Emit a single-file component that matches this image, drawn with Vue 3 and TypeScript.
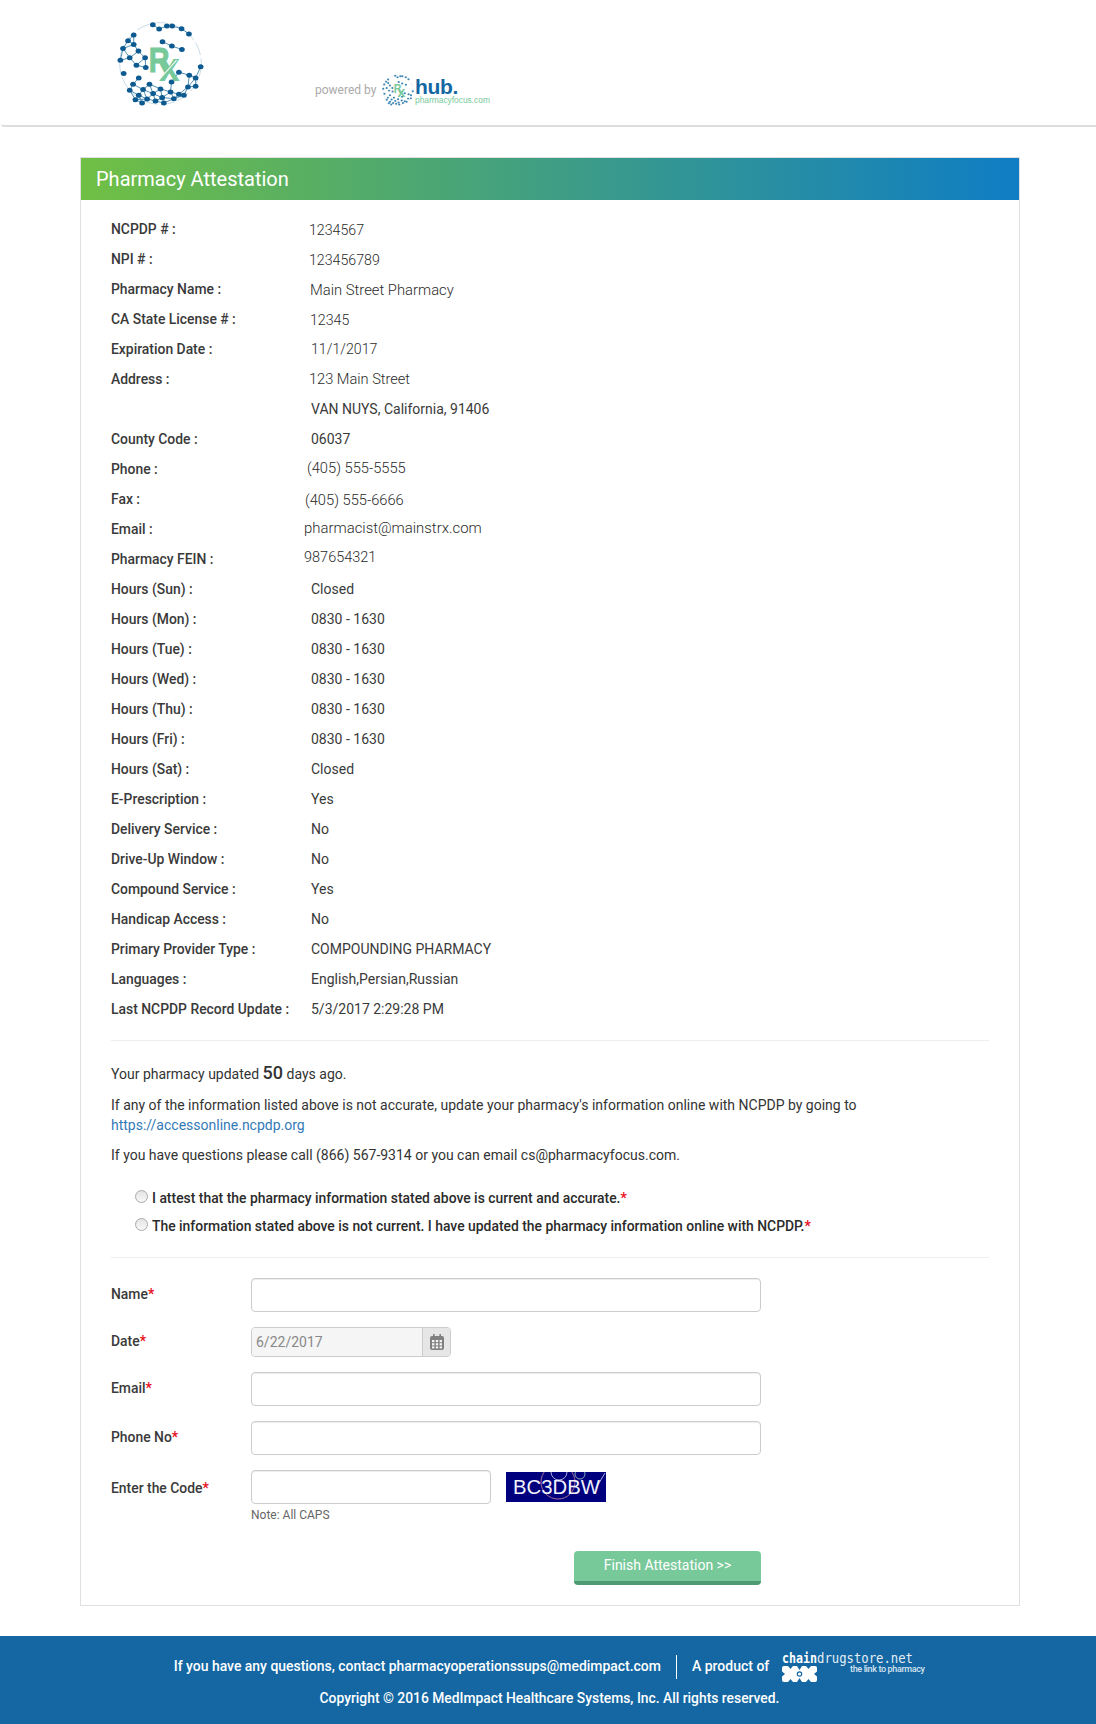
<script setup lang="ts">
interface Row { label: string; value: string; pad: number; dy?: number; size?: number }

const rows: Row[] = [
  { label: 'NCPDP # :', value: '1234567', pad: 5, size: 14.2, dy: 1 },
  { label: 'NPI # :', value: '123456789', pad: 5, size: 14.2, dy: 1 },
  { label: 'Pharmacy Name :', value: 'Main Street Pharmacy', pad: 6, size: 14.8, dy: 1 },
  { label: 'CA State License # :', value: '12345', pad: 6, size: 14.2, dy: 1 },
  { label: 'Expiration Date :', value: '11/1/2017', pad: 7, size: 14.2 },
  { label: 'Address :', value: '123 Main Street', pad: 5, size: 14.6 },
  { label: '', value: 'VAN NUYS, California, 91406', pad: 7 },
  { label: 'County Code :', value: '06037', pad: 7 },
  { label: 'Phone :', value: '(405) 555-5555', pad: 3, dy: -3, size: 14.7 },
  { label: 'Fax :', value: '(405) 555-6666', pad: 1, dy: 1, size: 14.7 },
  { label: 'Email :', value: 'pharmacist@mainstrx.com', pad: 0, dy: -3, size: 14.9 },
  { label: 'Pharmacy FEIN :', value: '987654321', pad: 0, dy: -3, size: 14.5 },
  { label: 'Hours (Sun) :', value: 'Closed', pad: 7 },
  { label: 'Hours (Mon) :', value: '0830 - 1630', pad: 7 },
  { label: 'Hours (Tue) :', value: '0830 - 1630', pad: 7 },
  { label: 'Hours (Wed) :', value: '0830 - 1630', pad: 7 },
  { label: 'Hours (Thu) :', value: '0830 - 1630', pad: 7 },
  { label: 'Hours (Fri) :', value: '0830 - 1630', pad: 7 },
  { label: 'Hours (Sat) :', value: 'Closed', pad: 7 },
  { label: 'E-Prescription :', value: 'Yes', pad: 7 },
  { label: 'Delivery Service :', value: 'No', pad: 7 },
  { label: 'Drive-Up Window :', value: 'No', pad: 7 },
  { label: 'Compound Service :', value: 'Yes', pad: 7 },
  { label: 'Handicap Access :', value: 'No', pad: 7 },
  { label: 'Primary Provider Type :', value: 'COMPOUNDING PHARMACY', pad: 7 },
  { label: 'Languages :', value: 'English,Persian,Russian', pad: 7 },
  { label: 'Last NCPDP Record Update :', value: '5/3/2017 2:29:28 PM', pad: 7 },
]

const dots: [number, number][] = [
  [157, 44], [176, 57], [199, 48], [215, 48], [243, 56], [265, 72], [100, 75], [83, 92], [100, 103], [68, 115],
  [88, 143], [114, 123], [134, 143], [186, 95], [214, 108], [244, 118], [60, 150], [108, 165], [136, 172], [70, 190],
  [235, 186], [266, 195], [285, 203], [300, 170], [115, 203], [147, 222], [180, 236], [213, 215], [98, 222], [128, 238],
  [158, 250], [185, 262], [210, 245], [235, 252], [262, 230], [285, 228], [115, 255], [140, 266], [165, 272], [190, 278],
  [220, 265], [250, 255], [88, 240], [105, 268], [125, 278],
]

const links: [number, number, number, number][] = []
dots.forEach((a, i) => {
  dots.slice(i + 1).forEach((b) => {
    if (Math.hypot(a[0] - b[0], a[1] - b[1]) < 37) links.push([a[0], a[1], b[0], b[1]])
  })
})
</script>

<template>
  <div class="page">
    <header class="top">
      <svg class="logo" width="87" height="87" viewBox="50 30 260 260">
        <circle cx="180" cy="160" r="122" fill="none" stroke="#bcd4e4" stroke-width="2.5" stroke-dasharray="40 10" />
        <line v-for="(l, i) in links" :key="'l' + i" :x1="l[0]" :y1="l[1]" :x2="l[2]" :y2="l[3]" stroke="#3a80ad" stroke-width="2.6" />
        <ellipse v-for="(d, i) in dots" :key="'d' + i" :cx="d[0]" :cy="d[1]" rx="8.5" ry="7.5" fill="#0c5a90" />
        <text x="145" y="185" textLength="62" lengthAdjust="spacingAndGlyphs" font-family="Liberation Sans, sans-serif" font-weight="700" font-size="107" fill="#78c99a" stroke="#78c99a" stroke-width="3">R</text>
        <text x="175" y="213" textLength="63" lengthAdjust="spacingAndGlyphs" font-family="Liberation Sans, sans-serif" font-weight="700" font-size="121" fill="#78c99a">x</text>
        <line x1="172" y1="213" x2="228" y2="150" stroke="#fff" stroke-width="3" />
      </svg>
      <div class="powered">
        <span class="powered-by">powered by</span>
        <svg class="logo-small" width="32" height="32" viewBox="50 30 260 260">
          <circle cx="180" cy="160" r="122" fill="none" stroke="#cfe0eb" stroke-width="3" stroke-dasharray="40 10" />
          <ellipse v-for="(d, i) in dots" :key="'s' + i" :cx="d[0]" :cy="d[1]" rx="9" ry="8" fill="#3f86b4" />
          <text x="145" y="185" textLength="62" lengthAdjust="spacingAndGlyphs" font-family="Liberation Sans, sans-serif" font-weight="700" font-size="107" fill="#78c99a">R</text>
          <text x="175" y="213" textLength="63" lengthAdjust="spacingAndGlyphs" font-family="Liberation Sans, sans-serif" font-weight="700" font-size="121" fill="#78c99a">x</text>
        </svg>
        <div class="hub">
          <span class="hub-name">hub.</span>
          <span class="hub-site">pharmacyfocus.com</span>
        </div>
      </div>
    </header>

    <main class="panel">
      <h1 class="panel-title">Pharmacy Attestation</h1>
      <div class="panel-body">
        <div v-for="(r, i) in rows" :key="i" class="row">
          <span class="row-label">{{ r.label }}</span>
          <span
            class="row-value"
            :class="{ light: r.size }"
            :style="{ paddingLeft: r.pad + 'px', marginTop: (r.dy ?? 0) + 'px', fontSize: (r.size ?? 14) + 'px' }"
          >{{ r.value }}</span>
        </div>

        <hr class="rule first" />

        <p class="updated">Your pharmacy updated <b>50</b> days ago.</p>
        <p class="info">
          If any of the information listed above is not accurate, update your pharmacy's information online with NCPDP by going to<br />
          <a href="#">https://accessonline.ncpdp.org</a>
        </p>
        <p class="info questions">If you have questions please call (866) 567-9314 or you can email cs@pharmacyfocus.com.</p>

        <div class="attest">
          <label class="attest-row">
            <input type="radio" name="attest" />
            <span>I attest that the pharmacy information stated above is current and accurate.<i>*</i></span>
          </label>
          <label class="attest-row">
            <input type="radio" name="attest" />
            <span>The information stated above is not current. I have updated the pharmacy information online with NCPDP.<i>*</i></span>
          </label>
        </div>

        <hr class="rule second" />

        <form class="form" @submit.prevent>
          <div class="field">
            <label>Name<i>*</i></label>
            <input class="input" type="text" />
          </div>
          <div class="field">
            <label>Date<i>*</i></label>
            <div class="date">
              <input class="date-input" type="text" value="6/22/2017" disabled />
              <span class="date-btn">
                <svg width="14" height="16" viewBox="0 0 14 16">
                  <rect x="0" y="2" width="14" height="14" rx="2" fill="#808080" />
                  <rect x="3" y="0" width="1.6" height="3.4" fill="#808080" />
                  <rect x="9.4" y="0" width="1.6" height="3.4" fill="#808080" />
                  <g fill="#f4f4f4">
                    <rect x="2" y="6" width="2.4" height="2.2" /><rect x="5.8" y="6" width="2.4" height="2.2" /><rect x="9.6" y="6" width="2.4" height="2.2" />
                    <rect x="2" y="9.2" width="2.4" height="2.2" /><rect x="5.8" y="9.2" width="2.4" height="2.2" /><rect x="9.6" y="9.2" width="2.4" height="2.2" />
                    <rect x="2" y="12.4" width="2.4" height="2" /><rect x="5.8" y="12.4" width="2.4" height="2" /><rect x="9.6" y="12.4" width="2.4" height="2" />
                  </g>
                </svg>
              </span>
            </div>
          </div>
          <div class="field">
            <label>Email<i>*</i></label>
            <input class="input" type="text" />
          </div>
          <div class="field">
            <label>Phone No<i>*</i></label>
            <input class="input" type="text" />
          </div>
          <div class="field code">
            <label>Enter the Code<i>*</i></label>
            <input class="input code-input" type="text" />
            <svg class="captcha" width="100" height="30" viewBox="0 0 100 30">
              <rect width="100" height="30" fill="#00007f" />
              <g fill="none" stroke-width="0.8">
                <circle cx="52" cy="10" r="17" stroke="#d88a9a" />
                <circle cx="53" cy="0" r="8" stroke="#d7d7ef" />
                <circle cx="74" cy="2" r="5" stroke="#9fd8c0" />
                <line x1="90" y1="16" x2="99" y2="1" stroke="#d7d7ef" />
              </g>
              <text x="7" y="21.5" textLength="87" font-family="Liberation Sans, sans-serif" font-size="20.3" fill="#f2f2fb">BC3DBW</text>
            </svg>
          </div>
          <div class="note">Note: All CAPS</div>
          <div class="actions">
            <button class="finish" type="submit">Finish Attestation &gt;&gt;</button>
          </div>
        </form>
      </div>
    </main>

    <footer class="foot">
      <div class="foot-top">
        <span class="foot-ask">If you have any questions, contact pharmacyoperationssups@medimpact.com</span>
        <span class="foot-div"></span>
        <span class="foot-product">A product of</span>
        <svg class="cds" width="144" height="32" viewBox="0 0 144 32">
          <text x="0" y="11" textLength="35" lengthAdjust="spacingAndGlyphs" font-family="DejaVu Sans Mono, monospace" font-weight="700" font-size="14" fill="#fff">chain</text>
          <text x="35" y="11" textLength="96" lengthAdjust="spacingAndGlyphs" font-family="DejaVu Sans Mono, monospace" font-weight="400" font-size="14" fill="#e4eef5">drugstore.net</text>
          <text x="68" y="20" textLength="75" font-family="Roboto, sans-serif" font-size="9" fill="#d5e4ef">the link to pharmacy</text>
          <rect x="0" y="14" width="35" height="16" rx="2" fill="#fff" />
          <g fill="#1467a3">
            <polygon points="6,14 11,14 8.5,17" />
            <polygon points="15,14 20,14 17.5,18" />
            <polygon points="24,14 29,14 26.5,17" />
            <polygon points="6,30 11,30 8.5,27" />
            <polygon points="15,30 20,30 17.5,26" />
            <polygon points="24,30 29,30 26.5,27" />
            <polygon points="0,19.5 0,24.5 3,22" />
            <polygon points="35,19.5 35,24.5 32,22" />
          </g>
          <circle cx="17.5" cy="22" r="2.2" fill="#fff" stroke="#1467a3" stroke-width="1.2" />
        </svg>
      </div>
      <div class="foot-copy">Copyright © 2016 MedImpact Healthcare Systems, Inc. All rights reserved.</div>
    </footer>
  </div>
</template>

<style>
html, body { margin: 0; background: #fff; }
</style>

<style scoped>
.page {
  width: 1096px;
  height: 1724px;
  display: flex;
  flex-direction: column;
  font-family: Roboto, "Liberation Sans", sans-serif;
  font-size: 14px;
  color: #333;
  overflow: hidden;
}

.top {
  height: 125px;
  border-bottom: 2px solid #ddd;
  border-radius: 0 0 0 3px;
  margin-left: 1px;
  display: flex;
  padding-left: 116px;
  flex: none;
}
.logo { margin-top: 20px; flex: none; }
.powered {
  margin-left: 111px;
  margin-top: 74px;
  height: 32px;
  display: flex;
  align-items: center;
}
.powered-by { color: #aaa; font-size: 12px; width: 67px; }
.logo-small { flex: none; }
.hub { display: flex; flex-direction: column; font-family: "Liberation Sans", sans-serif; margin: 2px 0 0 1px; }
.hub-name { color: #1467a3; font-weight: 700; font-size: 21px; line-height: 19px; letter-spacing: -0.3px; }
.hub-site { color: #78c99a; font-size: 8.4px; line-height: 9px; font-weight: 400; }

.panel {
  margin: 30px 76px 0 80px;
  width: 940px;
  box-sizing: border-box;
  border: 1px solid #e0e0e0;
  flex: none;
}
.panel-title {
  margin: 0;
  height: 42px;
  line-height: 42px;
  padding-left: 15px;
  color: #fff;
  font-size: 20px;
  font-weight: 400;
  background: linear-gradient(90deg, #70bf44 0%, #0f7dc4 100%);
}
.panel-body { padding: 14px 30px 20px; }

.row { height: 30px; display: flex; align-items: center; }
.row-label { width: 193px; flex: none; font-weight: 500; color: #3a3a3a; font-size: 13.9px; }
.row-value { color: #3a3a3a; white-space: nowrap; }
.row-value.light { color: #2b2b2b; font-weight: 300; }

.rule { border: 0; border-top: 1px solid #eee; margin: 0; }
.rule.first { margin: 16px 0 0; }
.rule.second { margin: 17px 0 0; }

p { margin: 0; line-height: 20px; }
.updated { margin-top: 21px; height: 22px; line-height: 22px; }
.updated b { font-size: 18px; font-weight: 500; }
.info { margin-top: 11px; }
.questions { margin-top: 10px; }
.info a { color: #337ab7; text-decoration: none; }

.attest { margin-top: 19px; padding-left: 24px; }
.attest-row { display: flex; height: 28px; align-items: center; font-weight: 500; font-size: 13.9px; color: #2b2b2b; }
.attest-row input {
  appearance: none;
  width: 13px;
  height: 13px;
  margin: -4px 4px 0 0;
  border: 1px solid #aaa;
  border-radius: 50%;
  background: linear-gradient(#e4e4e4, #f8f8f8);
  box-sizing: border-box;
}
i { font-style: normal; color: #e8121c; font-weight: 700; }

.form { margin-top: 20px; }
.field { display: flex; align-items: center; margin-bottom: 15px; }
.field label { width: 140px; flex: none; font-weight: 500; font-size: 13.9px; margin-top: -2px; color: #3a3a3a; }
.field.code label { margin-top: 2px; }
.input {
  width: 510px;
  height: 34px;
  box-sizing: border-box;
  border: 1px solid #ccc;
  border-radius: 4px;
  background: #fff;
  box-shadow: inset 0 1px 1px rgba(0, 0, 0, .075);
  padding: 0 6px;
}
.date {
  width: 200px;
  height: 30px;
  display: flex;
  box-sizing: border-box;
  border: 1px solid #ccc;
  border-radius: 4px;
  overflow: hidden;
}
.date-input {
  width: 170px;
  flex: none;
  box-sizing: border-box;
  border: 0;
  padding: 0 4px;
  background: #f5f5f5;
  font: 14px Roboto, sans-serif;
  color: #888;
}
.date-btn {
  flex: 1;
  background: #e6e6e6;
  border-left: 1px solid #ccc;
  display: flex;
  align-items: center;
  justify-content: center;
}
.field.code { margin-bottom: 0; }
.code-input { width: 240px; }
.captcha { margin-left: 15px; flex: none; }
.note { margin-left: 140px; height: 22px; line-height: 22px; font-size: 12px; color: #666; }
.actions { display: flex; justify-content: flex-end; margin-top: 25px; padding-right: 228px; }
.finish {
  width: 187px;
  height: 34px;
  border: 0;
  border-bottom: 4px solid #4f9a73;
  border-radius: 4px;
  background: #78c99a;
  color: #fff;
  font: 400 14px Roboto, sans-serif;
  padding: 0 0 2px;
}

.foot {
  margin-top: 30px;
  flex: 1;
  background: #1467a3;
  color: #fff;
  font-weight: 500;
  font-size: 14px;
}
.foot-top { display: flex; justify-content: center; align-items: center; height: 24px; margin-top: 19px; padding-left: 4px; }
.foot-ask { white-space: nowrap; font-size: 13.95px; margin-top: -2px; }
.foot-div { width: 1px; height: 24px; background: #fff; margin: 0 15px; }
.foot-product { white-space: nowrap; margin: -2px 13px 0 0; }
.cds { flex: none; margin-top: 1px; overflow: visible; }
.foot-copy { text-align: center; margin-top: 9px; line-height: 20px; font-size: 13.85px; padding-left: 3px; }
</style>
